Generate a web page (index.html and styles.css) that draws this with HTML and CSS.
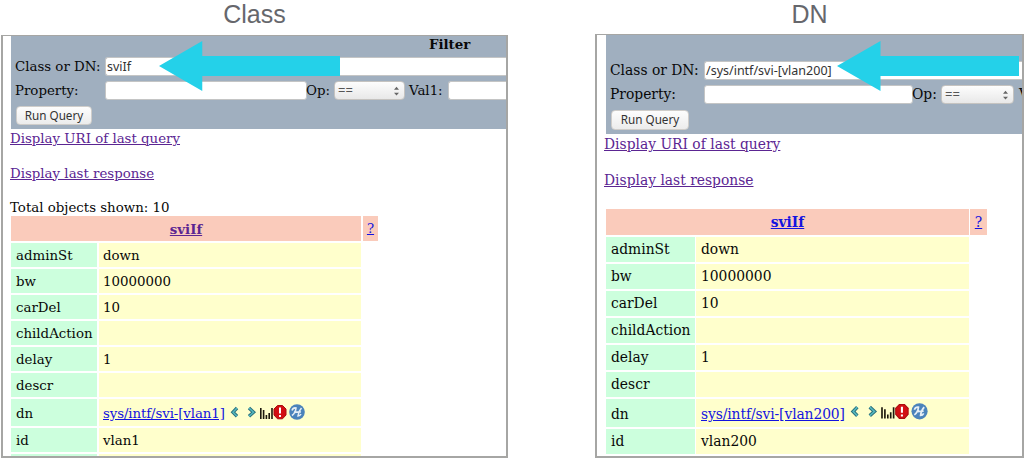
FILE: index.html
```html
<!DOCTYPE html>
<html lang="en">
<head>
<meta charset="utf-8">
<title>Object query</title>
<link rel="stylesheet" href="styles.css">
</head>
<body>
<svg class="defs" aria-hidden="true">
  <symbol id="tools" viewBox="0 0 80 18">
    <path d="M8 4 4 8.200l4 4" fill="none" stroke="#2b6f7c" stroke-width="3.400"/>
    <path d="M8 4 4 8.200l4 4" fill="none" stroke="#55b8bf" stroke-width="1.500"/>
    <path d="m20 4 4.500 4.200-4.500 4" fill="none" stroke="#2b6f7c" stroke-width="3.400"/>
    <path d="m20 4 4.500 4.200-4.500 4" fill="none" stroke="#55b8bf" stroke-width="1.500"/>
    <path d="M31.800 4v11M34.600 6v9M37.400 11v4M40.200 9v6M43 4v11" stroke="#1c180c" stroke-width="1.600"/>
    <path d="M48.500 1.500h5l3.500 3.500v6l-3.500 3.800h-5l-3.500-3.800v-6z" fill="#d30f12" stroke="#a90d10" stroke-width="1"/>
    <path d="M51 3.500v6M51 11v2" stroke="#fff" stroke-width="2"/>
    <circle cx="68" cy="8" r="7.800" fill="#4b83bb"/>
    <path d="M63 6.500q1-3 4-2.500-.5 5-4 7.500M72.500 4q-3 3-3.500 8 2 0 3-2M65 8.500q4-1 7-.500" fill="none" stroke="#e4edf5" stroke-width="1.600"/>
  </symbol>
  <symbol id="arrow" viewBox="0 0 182 50" preserveAspectRatio="none">
    <path d="M0 25 43.500 0v15H182v20H43.500v15z" fill="#24d1e9"/>
  </symbol>
</svg>
<main class="page">
  <section class="example class-example">
    <h1 class="heading">Class</h1>
    <div class="panel">
      <form class="filter">
        <div class="filter-title">Filter</div>
        <div class="field-row"><span class="field-label">Class or DN:</span><span class="input wide">sviIf</span></div>
        <div class="field-row property"><span class="field-label">Property:</span><span class="input property-input"></span><span class="op">Op:</span><span class="select"><span>==</span><svg class="spin" viewBox="0 0 6 12"><path d="M0 4.500 3 1l3 3.500zM0 8l3 3.500L6 8z"/></svg></span><span class="val">Val1:</span><span class="input wide"></span></div>
        <span class="button">Run Query</span>
        <svg class="arrow"><use href="#arrow"/></svg>
      </form>
      <div class="links">
        <p><a class="visited">Display URI of last query</a></p>
        <p><a class="visited">Display last response</a></p>
        <p>Total objects shown: 10</p>
      </div>
      <div class="objects">
        <div class="head"><a class="visited">sviIf</a></div><div class="help"><a>?</a></div>
        <div class="key">adminSt</div><div class="value">down</div>
        <div class="key">bw</div><div class="value">10000000</div>
        <div class="key">carDel</div><div class="value">10</div>
        <div class="key">childAction</div><div class="value"></div>
        <div class="key">delay</div><div class="value">1</div>
        <div class="key">descr</div><div class="value"></div>
        <div class="key dn">dn</div><div class="value dn"><a>sys/intf/svi-[vlan1]</a><svg class="tools"><use href="#tools"/></svg></div>
        <div class="key">id</div><div class="value">vlan1</div>
        <div class="key"></div><div class="value"></div>
      </div>
    </div>
  </section>
  <section class="example dn-example">
    <h1 class="heading">DN</h1>
    <div class="panel">
      <form class="filter">
        <div class="filter-title"></div>
        <div class="field-row"><span class="field-label">Class or DN:</span><span class="input wide">/sys/intf/svi-[vlan200]</span></div>
        <div class="field-row property"><span class="field-label">Property:</span><span class="input property-input"></span><span class="op">Op:</span><span class="select"><span>==</span><svg class="spin" viewBox="0 0 6 12"><path d="M0 4.500 3 1l3 3.500zM0 8l3 3.500L6 8z"/></svg></span><span class="val">V</span></div>
        <span class="button">Run Query</span>
        <svg class="arrow"><use href="#arrow"/></svg>
      </form>
      <div class="links">
        <p><a class="visited">Display URI of last query</a></p>
        <p><a class="visited">Display last response</a></p>
      </div>
      <div class="objects">
        <div class="head"><a>sviIf</a></div><div class="help"><a>?</a></div>
        <div class="key">adminSt</div><div class="value">down</div>
        <div class="key">bw</div><div class="value">10000000</div>
        <div class="key">carDel</div><div class="value">10</div>
        <div class="key">childAction</div><div class="value"></div>
        <div class="key">delay</div><div class="value">1</div>
        <div class="key">descr</div><div class="value"></div>
        <div class="key dn">dn</div><div class="value dn"><a>sys/intf/svi-[vlan200]</a><svg class="tools"><use href="#tools"/></svg></div>
        <div class="key">id</div><div class="value">vlan200</div>
      </div>
    </div>
  </section>
</main>
</body>
</html>
```
FILE: styles.css
```css
* { box-sizing: border-box; }

body {
  margin: 0;
  background: #fff;
  color: #080808;
  font-family: "DejaVu Serif", serif;
}

.defs { position: absolute; width: 0; height: 0; }

.page {
  display: grid;
  grid-template-columns: 507px 429px;
  column-gap: 87px;
  padding-left: 1px;
  width: 1024px;
  height: 458px;
  overflow: hidden;
}

.example { display: flex; flex-direction: column; height: 458px; white-space: nowrap; }

.class-example {
  --font: 13.35px;
  --row: 24px;
  --line: 26px;
}

.dn-example {
  --font: 13.85px;
  --row: 25px;
  --line: 25px;
}

.heading {
  margin: 0;
  height: 35px;
  font: 400 25px/28px "Liberation Sans", Arial, sans-serif;
  color: #66676c;
  text-align: center;
}

.dn-example .heading { height: 34px; }

.panel {
  flex: 1;
  min-height: 0;
  overflow: hidden;
  border: 2px solid #a6a6a4;
  border-top-width: 1px;
  padding-left: 8px;
  font-size: var(--font);
}

.dn-example .panel { padding-left: 9px; }

.filter {
  position: relative;
  height: 93px;
  padding-left: 4px;
  background: #a0afbf;
}

.dn-example .filter { height: 99px; }

.filter-title {
  height: 21px;
  line-height: 17px;
  padding-left: 414px;
  font-weight: bold;
}

.dn-example .filter-title { height: 26px; }

.field-row { display: flex; height: 19px; line-height: 20px; }
.field-row.property { margin-top: 5px; }
.dn-example .field-row { line-height: 18px; }

.field-label { width: 90px; flex: none; }
.dn-example .field-label { width: 94px; }

.input {
  height: 19px;
  background: #fff;
  border: 1px solid #c4c5c5;
  border-radius: 3px;
  padding-left: 1px;
  font: 12.5px/17px "Noto Sans", "Open Sans", sans-serif;
  color: #333;
}

.input.wide { flex: 1; border-right: 0; border-radius: 3px 0 0 3px; }
.property-input { width: 202px; flex: none; }
.dn-example .property-input { width: 209px; }

.op { width: 27px; flex: none; margin-left: -1px; margin-right: 1px; }
.dn-example .op { width: 28px; }

.select {
  display: flex;
  justify-content: space-between;
  align-items: center;
  flex: none;
  width: 71px;
  height: 19px;
  padding: 0 5px 0 3px;
  border: 1px solid #c5c3c0;
  border-radius: 4px;
  background: linear-gradient(#fdfdfd, #e8e8e8);
  font: 13px/17px "Noto Sans", sans-serif;
  color: #555;
}

.dn-example .select { width: 73px; }
.spin { width: 5px; height: 12px; fill: #666; }
.val { width: 43px; padding-left: 4px; flex: none; }
.dn-example .val { padding-left: 5px; }

.button {
  display: block;
  width: 76px;
  height: 19px;
  margin: 6px 0 0 1px;
  border: 1px solid #cfcdca;
  border-radius: 4px;
  background: linear-gradient(#fdfdfd, #ececec);
  font: 11.7px/17px "Noto Sans", sans-serif;
  text-align: center;
  color: #333;
}

.dn-example .button { width: 78px; height: 20px; }

.arrow { position: absolute; left: 148px; top: 5px; width: 181px; height: 50px; }
.dn-example .arrow { left: 231px; top: 6px; width: 182px; }

.links { height: 87px; margin-left: -1px; }
.links p { margin: 0; height: 34.500px; line-height: 19px; }
.dn-example .links { height: 75px; padding-top: 1px; margin-left: -2px; }
.dn-example .links p { height: 36px; }

a { color: #1313e0; text-decoration: underline; }
a.visited { color: #5b2592; }

.objects {
  display: grid;
  grid-template-columns: 86px 262px 15px;
  gap: 2px;
  width: max-content;
}

.dn-example .objects { grid-template-columns: 89px 273px 17px; column-gap: 1px; }

.objects > div { height: var(--row); line-height: var(--line); }

.objects > .head {
  grid-column: 1 / 3;
  height: calc(var(--row) + 1px);
  line-height: calc(var(--row) + 2px);
  background: #facbbb;
  text-align: center;
  font-weight: bold;
}

.objects > .help {
  height: calc(var(--row) + 1px);
  line-height: calc(var(--row) + 2px);
  background: #facbbb;
  text-align: center;
}

.key { grid-column: 1; padding-left: 5px; background: #ccffdd; }
.value { grid-column: 2; padding-left: 4px; background: #ffffcc; }
.dn-example .value { padding-left: 5px; }

.objects > .dn { height: 27px; line-height: 30px; }
.dn-example .objects > .dn { height: 28px; }
.value.dn { display: flex; }
.value.dn a { letter-spacing: -0.1px; }
.tools { width: 80px; height: 18px; margin: 5px 0 0 4px; }
.dn-example .tools { width: 83px; height: 18.700px; margin-top: 4px; }
```
